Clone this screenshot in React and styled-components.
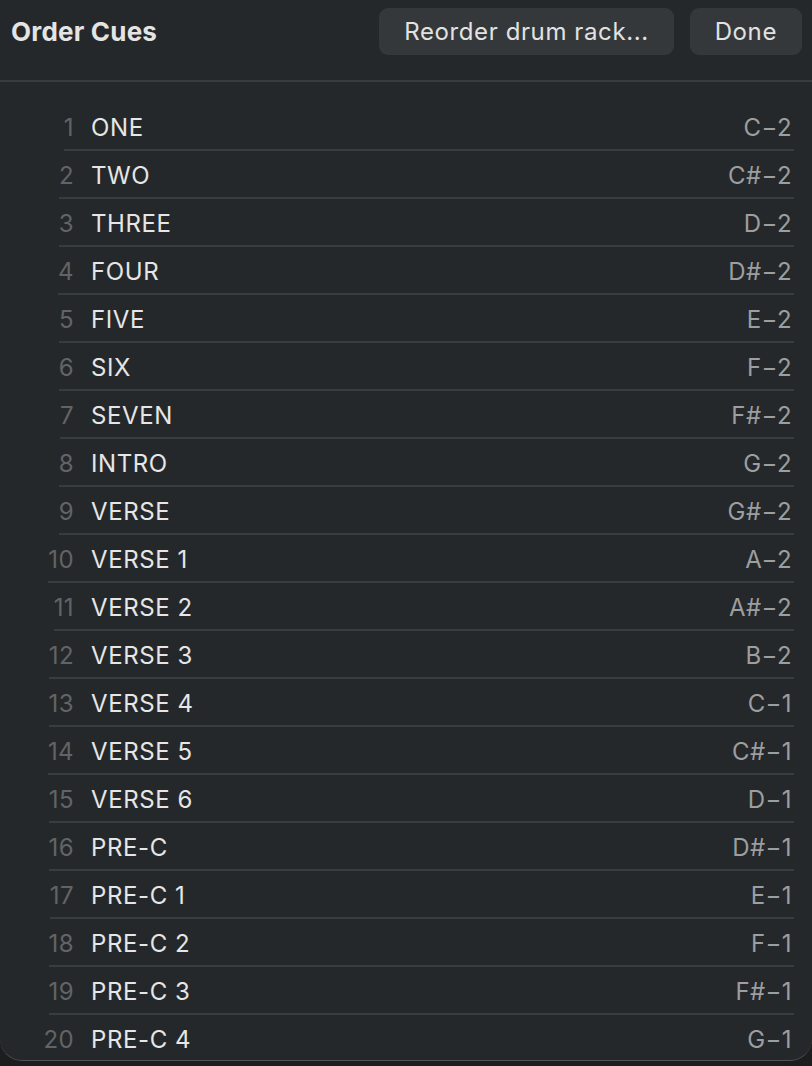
import styled, { createGlobalStyle } from "styled-components";

const cues = [
  ["ONE", "C−2"],
  ["TWO", "C#−2"],
  ["THREE", "D−2"],
  ["FOUR", "D#−2"],
  ["FIVE", "E−2"],
  ["SIX", "F−2"],
  ["SEVEN", "F#−2"],
  ["INTRO", "G−2"],
  ["VERSE", "G#−2"],
  ["VERSE 1", "A−2"],
  ["VERSE 2", "A#−2"],
  ["VERSE 3", "B−2"],
  ["VERSE 4", "C−1"],
  ["VERSE 5", "C#−1"],
  ["VERSE 6", "D−1"],
  ["PRE-C", "D#−1"],
  ["PRE-C 1", "E−1"],
  ["PRE-C 2", "F−1"],
  ["PRE-C 3", "F#−1"],
  ["PRE-C 4", "G−1"],
];

const App = () => {
  return (
    <>
      <GlobalStyle />
      <Panel>
        <Header>
          <Title>Order Cues</Title>
          <Actions>
            <Button>Reorder drum rack...</Button>
            <Button>Done</Button>
          </Actions>
        </Header>
        <List>
          {cues.map(([name, note], i) => (
            <Row key={name}>
              <Line last={i === cues.length - 1}>
                <Num>{i + 1}</Num>
                <Body>
                  <Name>{name}</Name>
                  <Note>{note}</Note>
                </Body>
              </Line>
            </Row>
          ))}
        </List>
      </Panel>
    </>
  );
};

const GlobalStyle = createGlobalStyle`
  body {
    margin: 0;
    background: #1b1d1e;
    font-family: Inter, "Noto Sans", sans-serif;
  }
`;
const Panel = styled.div`
  width: 812px;
  height: 1061px;
  background-color: #25282a;
  border-bottom: 1.5px solid #505355;
  border-radius: 0 0 22px 22px;
  overflow: hidden;
  box-sizing: border-box;
`;
const Header = styled.div`
  display: flex;
  align-items: center;
  justify-content: space-between;
  height: 82px;
  padding: 0 10px 17px 11px;
  box-sizing: border-box;
  border-bottom: 2px solid #393c3e;
`;
const Title = styled.h1`
  margin: 0;
  font-size: 26px;
  font-weight: 700;
  color: #e4e4e4;
  letter-spacing: 0.2px;
`;
const Actions = styled.div`
  display: flex;
  gap: 16px;
`;
const Button = styled.button`
  height: 47px;
  padding: 0 25px;
  border: none;
  border-radius: 9px;
  background-color: #35383a;
  color: #e2e2e2;
  font-family: Inter, "Noto Sans", sans-serif;
  font-size: 24px;
  letter-spacing: 0.6px;
  cursor: pointer;
`;
const List = styled.div`
  padding-top: 21px;
`;
const Row = styled.div`
  display: flex;
  justify-content: flex-end;
  padding-right: 18px;
`;
const Line = styled.div`
  display: flex;
  align-items: center;
  gap: 17px;
  height: 48px;
  padding-top: 2px;
  box-sizing: border-box;
  border-bottom: 2px solid ${(p) => (p.last ? "transparent" : "#393c3e")};
`;
const Num = styled.span`
  font-size: 24px;
  letter-spacing: 0.4px;
  color: #616466;
`;
const Body = styled.div`
  display: flex;
  justify-content: space-between;
  align-items: center;
  width: 703px;
  padding-right: 2px;
  box-sizing: border-box;
`;
const Name = styled.span`
  font-size: 24px;
  letter-spacing: 0.6px;
  color: #e6e6e6;
`;
const Note = styled.span`
  font-size: 24px;
  letter-spacing: 0.4px;
  color: #9c9ea0;
`;

export default App;
